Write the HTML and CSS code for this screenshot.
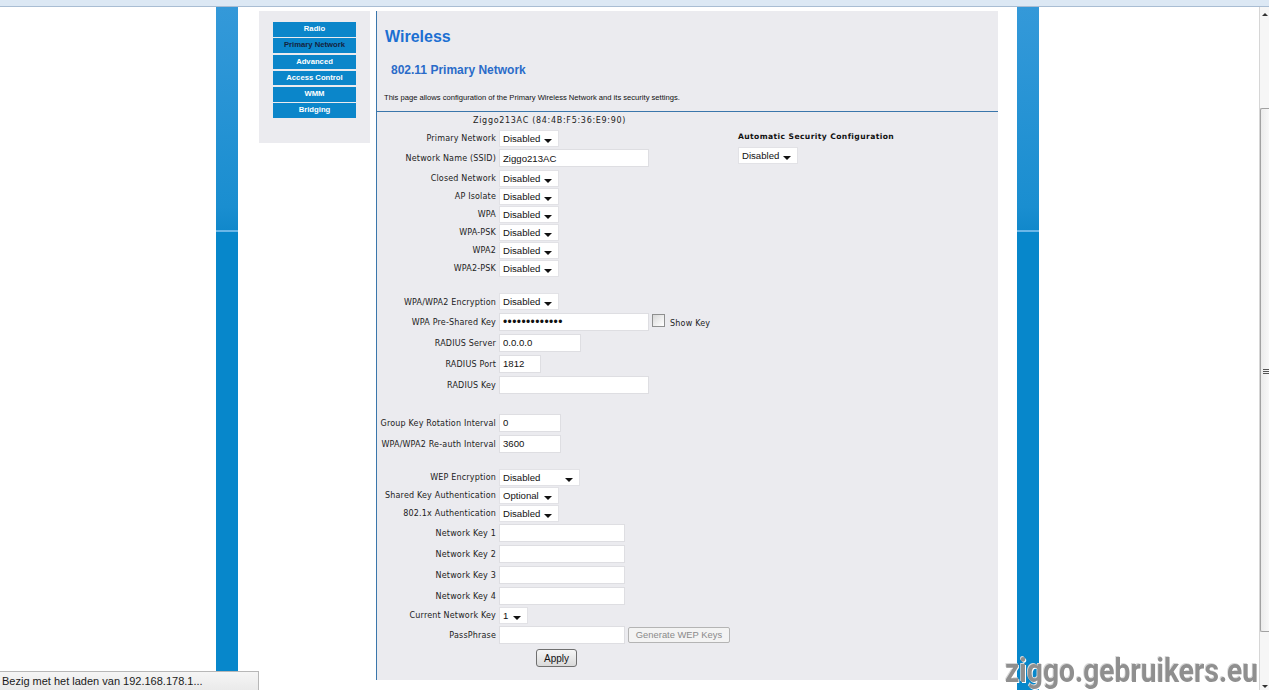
FILE: index.html
```html
<!DOCTYPE html>
<html lang="nl">
<head>
<meta charset="utf-8">
<title>Wireless - Primary Network</title>
<link rel="stylesheet" href="styles.css">
</head>
<body>
<div class="chrome"></div>
<div class="page">
  <div class="rail"></div>
  <nav class="nav">
    <a class="navbtn">Radio</a>
    <a class="navbtn active">Primary Network</a>
    <a class="navbtn">Advanced</a>
    <a class="navbtn">Access Control</a>
    <a class="navbtn">WMM</a>
    <a class="navbtn">Bridging</a>
  </nav>
  <main class="main">
    <header class="head">
      <h1>Wireless</h1>
      <h2>802.11 Primary Network</h2>
      <p>This page allows configuration of the Primary Wireless Network and its security settings.</p>
    </header>
    <div class="formarea">
      <div class="formcol">
        <div class="mac">Ziggo213AC (84:4B:F5:36:E9:90)</div>
        <div class="row r18"><label>Primary Network</label><span class="sel w60"><select><option>Disabled</option></select></span></div>
        <div class="row r22"><label>Network Name (SSID)</label><input class="txt w150" type="text" value="Ziggo213AC"></div>
        <div class="row r18"><label>Closed Network</label><span class="sel w60"><select><option>Disabled</option></select></span></div>
        <div class="row r18"><label>AP Isolate</label><span class="sel w60"><select><option>Disabled</option></select></span></div>
        <div class="row r18"><label>WPA</label><span class="sel w60"><select><option>Disabled</option></select></span></div>
        <div class="row r18"><label>WPA-PSK</label><span class="sel w60"><select><option>Disabled</option></select></span></div>
        <div class="row r18"><label>WPA2</label><span class="sel w60"><select><option>Disabled</option></select></span></div>
        <div class="row r18"><label>WPA2-PSK</label><span class="sel w60"><select><option>Disabled</option></select></span></div>
        <div class="sp15"></div>
        <div class="row r19"><label>WPA/WPA2 Encryption</label><span class="sel w60"><select><option>Disabled</option></select></span></div>
        <div class="row r21"><label>WPA Pre-Shared Key</label>
          <span class="ctl"><input class="txt w150 pw" type="password" value="abcdefghijklm"><input class="chk" type="checkbox"><span class="chklbl">Show Key</span></span>
        </div>
        <div class="row r21"><label>RADIUS Server</label><input class="txt w82" type="text" value="0.0.0.0"></div>
        <div class="row r21"><label>RADIUS Port</label><input class="txt w42" type="text" value="1812"></div>
        <div class="row r21"><label>RADIUS Key</label><input class="txt w150" type="text" value=""></div>
        <div class="sp17"></div>
        <div class="row r21"><label>Group Key Rotation Interval</label><input class="txt w62" type="text" value="0"></div>
        <div class="row r21"><label>WPA/WPA2 Re-auth Interval</label><input class="txt w62" type="text" value="3600"></div>
        <div class="sp14"></div>
        <div class="row r18"><label>WEP Encryption</label><span class="sel w81"><select><option>Disabled</option></select></span></div>
        <div class="row r18"><label>Shared Key Authentication</label><span class="sel w60"><select><option>Optional</option></select></span></div>
        <div class="row r18"><label>802.1x Authentication</label><span class="sel w60"><select><option>Disabled</option></select></span></div>
        <div class="row r21"><label>Network Key 1</label><input class="txt w126" type="text" value=""></div>
        <div class="row r21"><label>Network Key 2</label><input class="txt w126" type="text" value=""></div>
        <div class="row r21"><label>Network Key 3</label><input class="txt w126" type="text" value=""></div>
        <div class="row r21"><label>Network Key 4</label><input class="txt w126" type="text" value=""></div>
        <div class="row r18"><label>Current Network Key</label><span class="sel w29"><select><option>1</option></select></span></div>
        <div class="row r21"><label>PassPhrase</label>
          <span class="ctl"><input class="txt w126" type="text" value=""><button class="genbtn" type="button" disabled>Generate WEP Keys</button></span>
        </div>
        <div class="applyrow"><button class="apply" type="button">Apply</button></div>
      </div>
      <div class="sidecol">
        <div class="sidehead">Automatic Security Configuration</div>
        <span class="sel w60"><select><option>Disabled</option></select></span>
      </div>
    </div>
  </main>
  <div class="rail"></div>
</div>

<div class="scrollbar">
  <span class="sb-up"></span>
  <span class="sb-thumb"><span class="sb-grip"></span></span>
  <span class="sb-down"></span>
</div>
<div class="status">Bezig met het laden van 192.168.178.1...</div>
<div class="watermark">ziggo.gebruikers.eu</div>
</body>
</html>
```

FILE: styles.css
```css
html, body {
  margin: 0;
  padding: 0;
  height: 690px;
  overflow: hidden;
  background: #ffffff;
}

body {
  font-family: "DejaVu Sans", Verdana, sans-serif;
  font-size: 8px;
  color: #1e1e1e;
}

.chrome {
  height: 6px;
  background: #dce8f4;
  border-bottom: 1px solid #a9bdd3;
}

.page {
  display: flex;
  align-items: flex-start;
  margin-left: 216px;
  width: 823px;
  height: 683px;
}

.rail {
  width: 22px;
  height: 683px;
  flex: none;
  background: linear-gradient(to bottom,
    #3499d9 0px,
    #1a8ed0 200px,
    #1188cb 223px,
    #6ab7e8 223px,
    #6ab7e8 225px,
    #0787cb 225px,
    #0787cb 100%);
}

/* ---------- left navigation ---------- */
.nav {
  flex: none;
  width: 83px;
  height: 121px;
  margin: 4px 0 0 21px;
  padding: 11px 14px 0 14px;
  background: #ebebef;
  display: flex;
  flex-direction: column;
  gap: 1.8px;
}

.navbtn {
  display: block;
  height: 14.5px;
  line-height: 14.5px;
  background: #0b86ca;
  color: #ffffff;
  font-family: "Liberation Sans", Arial, sans-serif;
  font-weight: bold;
  font-size: 7.7px;
  text-align: center;
  text-decoration: none;
}

.navbtn.active {
  color: #14233f;
}

/* ---------- main panel ---------- */
.main {
  flex: none;
  width: 621px;
  height: 669px;
  margin: 4px 19px 0 6px;
  background: #ebebef;
  border-left: 1px solid #3a76ab;
}

.head {
  height: 100px;
  border-bottom: 1px solid #3a76ab;
  box-sizing: content-box;
  font-family: "Liberation Sans", Arial, sans-serif;
}

.head h1 {
  margin: 0;
  padding: 16px 0 0 8px;
  font-size: 16px;
  line-height: 20px;
  font-weight: bold;
  color: #1c6fd2;
}

.head h2 {
  margin: 15px 0 0 14px;
  font-size: 12px;
  line-height: 16px;
  font-weight: bold;
  color: #2a6bc9;
}

.head p {
  margin: 15px 0 0 7px;
  font-size: 7.6px;
  line-height: 10px;
  color: #111111;
}

.formarea {
  display: flex;
}

.formcol {
  width: 361px;
  flex: none;
}

.mac {
  height: 17px;
  line-height: 17px;
  padding-left: 96px;
  color: #222222;
  letter-spacing: 0.7px;
}

.row {
  display: grid;
  grid-template-columns: 119px auto;
  column-gap: 3px;
  align-items: center;
  justify-items: start;
}

.row label {
  justify-self: end;
  white-space: nowrap;
  color: #222222;
  letter-spacing: 0.18px;
  padding-top: 1px;
}

.r18 { height: 18px; }
.r19 { height: 19px; }
.r21 { height: 21px; }
.r22 { height: 22px; }
.sp14 { height: 14px; }
.sp15 { height: 15px; }
.sp17 { height: 17px; }

.ctl {
  display: flex;
  align-items: center;
}

/* select boxes */
.sel {
  position: relative;
  display: inline-block;
  height: 17px;
}

.sel select {
  appearance: none;
  -webkit-appearance: none;
  display: block;
  box-sizing: border-box;
  width: 100%;
  height: 17px;
  margin: 0;
  padding: 0 0 0 3px;
  border: 1px solid #e2e2e6;
  border-radius: 0;
  background: #ffffff;
  font-family: "Liberation Sans", Arial, sans-serif;
  font-size: 9.6px;
  color: #111111;
  outline: none;
}

.sel::after {
  content: "";
  position: absolute;
  right: 7px;
  top: 9px;
  width: 0;
  height: 0;
  border-left: 4px solid transparent;
  border-right: 4px solid transparent;
  border-top: 4px solid #111111;
  pointer-events: none;
}

.w29 { width: 29px; }
.w60 { width: 60px; }
.w81 { width: 81px; }

/* text inputs */
.txt {
  box-sizing: border-box;
  height: 18px;
  margin: 0;
  padding: 0 0 0 3px;
  border: 1px solid #dedee2;
  border-radius: 0;
  background: #ffffff;
  font-family: "Liberation Sans", Arial, sans-serif;
  font-size: 9.6px;
  color: #111111;
  outline: none;
}

.pw {
  font-size: 12px;
  letter-spacing: 0.4px;
}

.w42 { width: 42px; }
.w62 { width: 62px; }
.w82 { width: 82px; }
.w126 { width: 126px; }
.w150 { width: 150px; }

.chk {
  appearance: none;
  -webkit-appearance: none;
  box-sizing: border-box;
  width: 13px;
  height: 13px;
  margin: -3px 0 0 3px;
  border: 1px solid #8e8f8f;
  background: linear-gradient(135deg, #d8d8d8 0%, #f4f4f4 70%, #ffffff 100%);
  border-radius: 0;
}

.chklbl {
  margin: 4px 0 0 5px;
  color: #222222;
  letter-spacing: 0.2px;
}

.genbtn {
  box-sizing: border-box;
  height: 16px;
  width: 102px;
  margin: 0 0 0 3px;
  padding: 0;
  border: 1px solid #b4b4b4;
  border-radius: 2px;
  background: #f3f3f3;
  font-family: "Liberation Sans", Arial, sans-serif;
  font-size: 9.4px;
  color: #8a8a8a;
}

.applyrow {
  height: 27px;
  padding-left: 159px;
  box-sizing: border-box;
  padding-top: 4px;
}

.apply {
  box-sizing: border-box;
  width: 41px;
  height: 18px;
  margin: 0;
  padding: 0;
  border: 1px solid #6f6f6f;
  border-radius: 3px;
  background: linear-gradient(to bottom, #f6f6f6 0%, #e8e8e8 50%, #d9d9d9 100%);
  font-family: "Liberation Sans", Arial, sans-serif;
  font-size: 10px;
  color: #111111;
}

.sidecol {
  padding-top: 20px;
}

.sidehead {
  font-weight: bold;
  font-size: 7.6px;
  line-height: 10px;
  color: #111111;
  letter-spacing: 0.4px;
  margin-bottom: 5px;
}

/* ---------- browser overlays ---------- */
.scrollbar {
  position: fixed;
  top: 7px;
  right: 0;
  bottom: 0;
  width: 9px;
  background: #f6f6f6;
  border-left: 1px solid #d6d6d6;
}

.sb-up {
  position: absolute;
  top: 6px;
  left: 2px;
  border-left: 3px solid transparent;
  border-right: 3px solid transparent;
  border-bottom: 3px solid #333333;
}

.sb-down {
  position: absolute;
  bottom: 2px;
  left: 2px;
  border-left: 3px solid transparent;
  border-right: 3px solid transparent;
  border-top: 3px solid #333333;
}

.sb-thumb {
  position: absolute;
  top: 101px;
  left: 0;
  right: 0;
  height: 524px;
  box-sizing: border-box;
  border: 1px solid #a2a2a2;
  border-right: none;
  border-radius: 2px 0 0 2px;
  background: linear-gradient(to right, #ececec, #f8f8f8);
}

.sb-grip {
  position: absolute;
  top: 260px;
  left: 2px;
  width: 6px;
  height: 5px;
  background: repeating-linear-gradient(to bottom, #555555 0, #555555 1px, transparent 1px, transparent 2px);
}

.status {
  position: fixed;
  left: 0;
  bottom: 0;
  height: 19px;
  line-height: 19px;
  padding-left: 2px;
  box-sizing: border-box;
  width: 259px;
  background: linear-gradient(to bottom, #f5f5f5, #eaeaea);
  border-top: 1px solid #b7b7b7;
  border-right: 1px solid #b7b7b7;
  font-family: "Liberation Sans", Arial, sans-serif;
  font-size: 11px;
  color: #1a1a1a;
  white-space: nowrap;
}

.watermark {
  position: fixed;
  left: 1005px;
  top: 648px;
  font-family: Roboto, "Liberation Sans", sans-serif;
  font-weight: bold;
  font-size: 34px;
  line-height: 44px;
  color: #8f8f8f;
  transform: scaleX(0.83);
  transform-origin: left top;
  text-shadow: 1px 1px 0 #ffffff, -1px -1px 0 #d8d8d8;
  white-space: nowrap;
}
```
